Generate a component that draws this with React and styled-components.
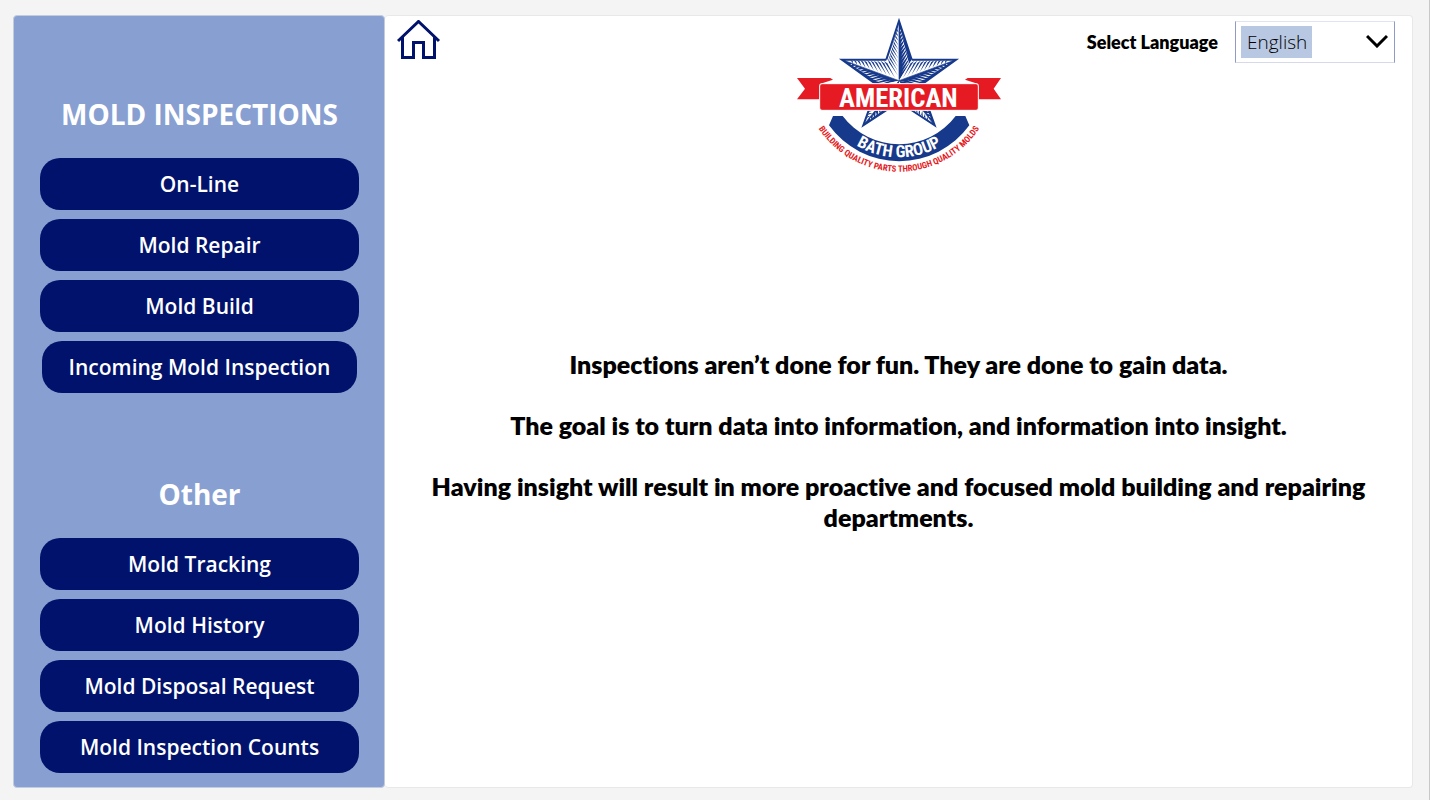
import React from 'react';
import styled, { createGlobalStyle } from 'styled-components';

const Global = createGlobalStyle`
  *, *::before, *::after { box-sizing: border-box; }
  body { margin: 0; background: #f4f4f4; font-family: "Open Sans", sans-serif; color: #000; }
`;

const Page = styled.div`
  display: grid;
  grid-template-columns: 93fr 257fr;
  min-height: 100vh;
  padding: 15px 16px 12px 13px;
  border-right: 1px solid #c8c8c8;
`;

const Sidebar = styled.nav`
  display: flex;
  flex-direction: column;
  gap: 82px;
  padding: 79px 25px 14px 26px;
  background: #889fd1;
  border: 1px solid #c3cbde;
  border-radius: 4px;
`;

const Group = styled.section`
  display: flex;
  flex-direction: column;
  align-items: center;
  gap: 9px;
`;

const Heading = styled.h2`
  margin: 0 0 16px;
  font-size: 28px;
  line-height: 38px;
  font-weight: 700;
  color: #fff;
`;

const NavButton = styled.button`
  width: ${(p) => (p.$narrow ? 'calc(100% - 4px)' : '100%')};
  height: 52px;
  padding: 0;
  border: 0;
  border-radius: 20px;
  background: #00126b;
  color: #fff;
  font: 600 21px/28px "Open Sans", sans-serif;
  cursor: pointer;
`;

const Main = styled.main`
  background: #fff;
  border: 1px solid #e8e8e8;
  border-left: 0;
  border-radius: 4px;
`;

const Header = styled.header`
  display: grid;
  grid-template-columns: 1fr auto 1fr;
  align-items: start;
`;

const HomeLink = styled.a`
  justify-self: start;
  margin: 4px 0 0 12px;
  svg { display: block; }
`;

const Language = styled.div`
  display: flex;
  justify-content: flex-end;
  align-items: center;
  gap: 17px;
  margin: 5px 17px 0 0;
`;

const LanguageLabel = styled.label`
  font: 800 18px/24px Lato, sans-serif;
  font-variant-ligatures: none;
`;

const SelectWrap = styled.div`
  position: relative;
  width: 160px;
  svg { position: absolute; right: 7px; top: 13px; pointer-events: none; }
`;

const Select = styled.select`
  appearance: none;
  display: block;
  width: 100%;
  height: 42px;
  padding: 0 40px 0 11px;
  border: 1px solid #8f9ac6;
  border-top-color: #e0e3f0;
  border-bottom-color: #d5d9ea;
  border-radius: 0;
  background: linear-gradient(#b8c8e2, #b8c8e2) 5px 4px / 71px 32px no-repeat #fff;
  color: #000;
  font: 300 19px/26px "Open Sans", sans-serif;
`;

const Message = styled.div`
  display: flex;
  flex-direction: column;
  gap: 30px;
  margin-top: 169px;
  padding: 0 24px;
  text-align: center;
  font: 800 25px/31px Lato, sans-serif;
  font-variant-ligatures: none;
  p { margin: 0; }
`;

const LogoText = styled.text`
  font-family: "Roboto Condensed", Roboto, sans-serif;
  font-weight: 700;
  font-size: ${(p) => p.$size}px;
  fill: ${(p) => p.$fill};
  text-anchor: middle;
`;

function Home() {
  return (
    <svg width="44" height="41" viewBox="0 0 44 41" fill="none" stroke="#00126b" strokeWidth="3">
      <path d="M1 21 21.500 1.500 42 21" />
      <path d="M5.500 17V37.500H16.500V22.500H26.500V37.500H37.500V17" />
    </svg>
  );
}

const BLUE = '#17398b';
const RED = '#e61a23';
const CENTER = [326, 212];

// Each arm of the star: its tip, the corner on its light side, the corner on its dark side.
const arms = [
  { tip: [326, 33], light: [288, 149], dark: [364, 149] },
  { tip: [497, 149], light: [364, 149], dark: [390, 226] },
  { tip: [155, 149], light: [288, 149], dark: [262, 226] },
  { tip: [219, 346], light: [262, 226], dark: [326, 276] },
  { tip: [433, 346], light: [326, 276], dark: [390, 226] },
];

const mix = (a, b, t) => [a[0] + (b[0] - a[0]) * t, a[1] + (b[1] - a[1]) * t];
const pts = (...list) => list.map((p) => p.map((n) => n.toFixed(1)).join(',')).join(' ');

function hatch(tip, corner, from, to, width) {
  const out = [];
  for (let t = 0.2; t < 0.98; t += 0.075) {
    const spine = mix(tip, CENTER, t);
    const edge = mix(tip, corner, Math.max(0, t - 0.02));
    const a = mix(spine, edge, from);
    const b = mix(spine, edge, to);
    const c = mix(a, mix(tip, CENTER, t + 0.02), width);
    out.push(<polygon key={t} points={pts(a, b, [c[0] + (tip[0] - CENTER[0]) * -0.04, c[1] + (tip[1] - CENTER[1]) * -0.04])} />);
  }
  return out;
}

function Arm({ tip, light, dark }) {
  return (
    <>
      <polygon points={pts(tip, light, CENTER)} fill="#fff" />
      <g fill={BLUE}>{hatch(tip, light, 0.95, 0.1, 0.1)}</g>
      <polygon points={pts(tip, dark, CENTER)} fill={BLUE} />
      <g fill="#fff">{hatch(tip, dark, 0.85, 0.25, 0.05)}</g>
      <polyline points={pts(light, tip, dark)} fill="none" stroke={BLUE} strokeWidth="6" strokeMiterlimit="8" />
      <polyline points={pts(tip, CENTER)} stroke={BLUE} strokeWidth="2" />
    </>
  );
}

function Logo() {
  return (
    <svg width="220" height="164" viewBox="-4 18 660 492" role="img" aria-label="American Bath Group">
      <defs>
        <path id="band-line" d="M77 193A249 249 0 0 0 575 193" />
        <path id="motto-line" d="M37 196A289 289 0 0 0 615 196" />
      </defs>
      {arms.map((arm) => <Arm key={arm.tip.join()} {...arm} />)}
      <path d="M20 204H120L128 209 88 222V268H20L44 236Z" fill={RED} />
      <path d="M632 204H532L524 209 564 222V268H632L610 236Z" fill={RED} />
      <rect x="88" y="221" width="476" height="80" rx="7" fill={RED} stroke="#fff" strokeWidth="3" />
      <path d="M128 318H157A212 212 0 0 0 496 318H525L537 346A260 260 0 0 1 116 346Z" fill={BLUE} />
      <LogoText $size={80} $fill="#fff" x="324" y="290">AMERICAN</LogoText>
      <LogoText $size={50} $fill="#fff"><textPath href="#band-line" startOffset="50%">BATH GROUP</textPath></LogoText>
      <LogoText $size={26} $fill={RED}><textPath href="#motto-line" startOffset="50%">BUILDING QUALITY PARTS THROUGH QUALITY MOLDS</textPath></LogoText>
    </svg>
  );
}

const inspections = ['On-Line', 'Mold Repair', 'Mold Build', 'Incoming Mold Inspection'];
const others = ['Mold Tracking', 'Mold History', 'Mold Disposal Request', 'Mold Inspection Counts'];

export default function App() {
  return (
    <>
      <Global />
      <Page>
        <Sidebar>
          <Group>
            <Heading>MOLD INSPECTIONS</Heading>
            {inspections.map((t) => <NavButton key={t} $narrow={t.startsWith('Incoming')}>{t}</NavButton>)}
          </Group>
          <Group>
            <Heading>Other</Heading>
            {others.map((t) => <NavButton key={t}>{t}</NavButton>)}
          </Group>
        </Sidebar>
        <Main>
          <Header>
            <HomeLink href="#" aria-label="Home"><Home /></HomeLink>
            <Logo />
            <Language>
              <LanguageLabel htmlFor="language">Select Language</LanguageLabel>
              <SelectWrap>
                <Select id="language" defaultValue="English"><option>English</option></Select>
                <svg width="22" height="14" viewBox="0 0 22 14" fill="none" stroke="#000" strokeWidth="3"><path d="M1 2 11 12 21 2" /></svg>
              </SelectWrap>
            </Language>
          </Header>
          <Message>
            <p>Inspections aren’t done for fun. They are done to gain data.</p>
            <p>The goal is to turn data into information, and information into insight.</p>
            <p>Having insight will result in more proactive and focused mold building and repairing departments.</p>
          </Message>
        </Main>
      </Page>
    </>
  );
}
